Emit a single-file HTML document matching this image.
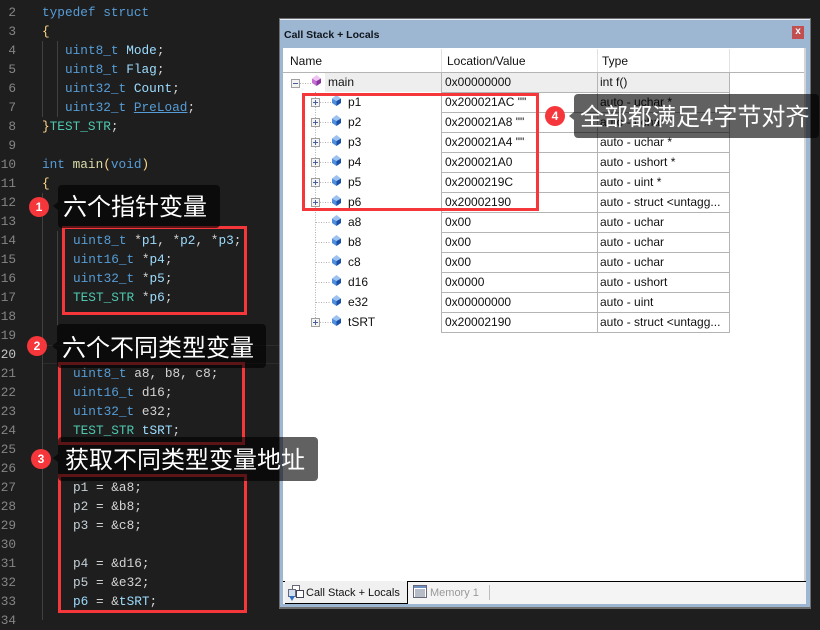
<!DOCTYPE html>
<html><head><meta charset="utf-8">
<style>
html,body{margin:0;padding:0;}
body{width:820px;height:620px;overflow:hidden;background:#1e1e1e;position:relative;font-family:"Liberation Sans","Noto Sans CJK SC",sans-serif;}
.a{position:absolute;}
.n,.c{position:absolute;font:12.75px/19px "Liberation Mono",monospace;white-space:pre;height:19px;}
.n{left:0;width:16px;text-align:right;color:#858585;}
.c{color:#d4d4d4;}
.k{color:#569cd6;}.t{color:#4ec9b0;}.v{color:#9cdcfe;}.f{color:#dcdcaa;}.b{color:#ffd68a;}.w{color:#c4d0d6;}
.g{position:absolute;width:1px;background:#404040;}
.r{position:absolute;font-size:12px;line-height:20px;color:#111;white-space:pre;}
.h{position:absolute;background:#b4b4b4;}
.lab{position:absolute;background:rgba(0,0,0,.62);border-radius:4px;color:#fff;font-family:"Liberation Sans","Noto Sans CJK SC",sans-serif;font-size:24px;white-space:pre;box-sizing:border-box;}
.bad{position:absolute;width:20px;height:20px;border-radius:50%;background:#f5363a;color:#fff;font:bold 12px/20px "Liberation Sans",sans-serif;text-align:center;}
.rb{position:absolute;border:3px solid #f5363a;box-sizing:border-box;}
.tri{position:absolute;width:0;height:0;border-top:4px solid transparent;border-bottom:4px solid transparent;border-right:5px solid rgba(0,0,0,.62);}
</style></head>
<body>
<div class="a" style="left:42px;top:345px;width:238px;height:1px;background:#2c2c2c"></div>
<div class="a" style="left:42px;top:363px;width:238px;height:1px;background:#2c2c2c"></div>
<div class="g" style="left:42px;top:41px;height:76px"></div>
<div class="g" style="left:57px;top:41px;height:76px"></div>
<div class="g" style="left:42px;top:193px;height:427px"></div>
<div class="g" style="left:57px;top:231px;height:94px"></div>

<div class="n" style="top:3px">2</div><div class="n" style="top:22px">3</div><div class="n" style="top:41px">4</div><div class="n" style="top:60px">5</div><div class="n" style="top:79px">6</div><div class="n" style="top:98px">7</div><div class="n" style="top:117px">8</div><div class="n" style="top:136px">9</div><div class="n" style="top:155px">10</div><div class="n" style="top:174px">11</div><div class="n" style="top:193px">12</div><div class="n" style="top:212px">13</div><div class="n" style="top:231px">14</div><div class="n" style="top:250px">15</div><div class="n" style="top:269px">16</div><div class="n" style="top:288px">17</div><div class="n" style="top:307px">18</div><div class="n" style="top:326px">19</div><div class="n" style="top:345px;color:#c6c6c6">20</div><div class="n" style="top:364px">21</div><div class="n" style="top:383px">22</div><div class="n" style="top:402px">23</div><div class="n" style="top:421px">24</div><div class="n" style="top:440px">25</div><div class="n" style="top:459px">26</div><div class="n" style="top:478px">27</div><div class="n" style="top:497px">28</div><div class="n" style="top:516px">29</div><div class="n" style="top:535px">30</div><div class="n" style="top:554px">31</div><div class="n" style="top:573px">32</div><div class="n" style="top:592px">33</div><div class="n" style="top:611px">34</div>

<div class="c k" style="left:42px;top:3px">typedef struct</div>
<div class="c b" style="left:42px;top:22px">{</div>
<div class="c" style="left:65px;top:41px"><span class="k">uint8_t</span> <span class="v">Mode</span>;</div>
<div class="c" style="left:65px;top:60px"><span class="k">uint8_t</span> <span class="v">Flag</span>;</div>
<div class="c" style="left:65px;top:79px"><span class="k">uint32_t</span> <span class="v">Count</span>;</div>
<div class="c" style="left:65px;top:98px"><span class="k">uint32_t</span> <span class="k" style="text-decoration:underline">PreLoad</span>;</div>
<div class="c" style="left:42px;top:117px"><span class="b">}</span><span class="t">TEST_STR</span>;</div>
<div class="c" style="left:42px;top:155px"><span class="k">int</span> <span class="f">main</span><span class="b">(</span><span class="k">void</span><span class="b">)</span></div>
<div class="c b" style="left:42px;top:174px">{</div>

<div class="c" style="left:73px;top:231px"><span class="k">uint8_t</span> *<span class="v">p1</span>, *<span class="v">p2</span>, *<span class="v">p3</span>;</div>
<div class="c" style="left:73px;top:250px"><span class="k">uint16_t</span> *<span class="v">p4</span>;</div>
<div class="c" style="left:73px;top:269px"><span class="k">uint32_t</span> *<span class="v">p5</span>;</div>
<div class="c" style="left:73px;top:288px"><span class="t">TEST_STR</span> *<span class="v">p6</span>;</div>

<div class="c" style="left:73px;top:364px"><span class="k">uint8_t</span> a8, b8, c8;</div>
<div class="c" style="left:73px;top:383px"><span class="k">uint16_t</span> d16;</div>
<div class="c" style="left:73px;top:402px"><span class="k">uint32_t</span> e32;</div>
<div class="c" style="left:73px;top:421px"><span class="t">TEST_STR</span> <span class="v">tSRT</span>;</div>

<div class="c" style="left:73px;top:478px"><span class="w">p1</span> = &amp;a8;</div>
<div class="c" style="left:73px;top:497px"><span class="w">p2</span> = &amp;b8;</div>
<div class="c" style="left:73px;top:516px"><span class="w">p3</span> = &amp;c8;</div>
<div class="c" style="left:73px;top:554px"><span class="w">p4</span> = &amp;d16;</div>
<div class="c" style="left:73px;top:573px"><span class="w">p5</span> = &amp;e32;</div>
<div class="c" style="left:73px;top:592px"><span class="v">p6</span> = &amp;<span class="v">tSRT</span>;</div>

<!-- window -->
<div class="a" style="left:279px;top:18px;width:532px;height:591px;background:#9db6d2;border:1px solid #6f6f6f;border-width:1px 1px 2px 1px;box-sizing:border-box"></div>
<div class="a" style="left:280px;top:19px;width:530px;height:1px;background:#e8eef5"></div>
<div class="a" style="left:284px;top:28px;font:bold 10.5px/14px 'Liberation Sans',sans-serif;color:#10161c;white-space:pre">Call Stack + Locals</div>
<div class="a" style="left:792px;top:26px;width:12px;height:13px;background:#c14f50;color:#fff;font:bold 10px/12px 'Liberation Sans',sans-serif;text-align:center">x</div>
<div class="a" style="left:283px;top:48px;width:523px;height:534px;background:#fff"></div>
<div class="a" style="left:804px;top:48px;width:2px;height:534px;background:#d4d4d4"></div>
<div class="a" style="left:283px;top:581px;width:523px;height:1px;background:#000"></div>
<div class="a" style="left:283px;top:582px;width:523px;height:22px;background:#f4f4f4"></div>
<div class="a" style="left:285px;top:581px;width:123px;height:23px;background:#f0f0f0;border-bottom:1px solid #000;border-right:1px solid #000;box-sizing:border-box"></div>
<svg class="a" style="left:287px;top:584px" width="18" height="18" viewBox="0 0 18 18"><rect x="5.5" y="1.5" width="7" height="7" fill="#fff" stroke="#667"/><rect x="1.5" y="5.5" width="7" height="7" fill="#cfe0f3" stroke="#667"/><rect x="9.500" y="6.500" width="7" height="7" fill="#fff" stroke="#445"/><path d="M2 12h6l-3 5z" fill="#2d6fc0"/></svg>
<div class="a" style="left:306px;top:586px;font:11px/14px 'Liberation Sans',sans-serif;color:#111;white-space:pre">Call Stack + Locals</div>
<svg class="a" style="left:413px;top:585px" width="14" height="13" viewBox="0 0 14 13"><rect x=".5" y=".5" width="13" height="12" fill="#fff" stroke="#667"/><rect x="1" y="1" width="12" height="2" fill="#6d8fc0"/><path d="M2 5h10M2 7h10M2 9h10M2 11h10M3 4v8M5 4v8M7 4v8M9 4v8M11 4v8" stroke="#8a93a8" stroke-width=".8"/></svg>
<div class="a" style="left:430px;top:586px;font:11px/14px 'Liberation Sans',sans-serif;color:#999;white-space:pre">Memory 1</div>
<div class="a" style="left:489px;top:585px;width:1px;height:15px;background:#bdbdbd"></div>

<!-- header -->
<div class="a" style="left:290px;top:54px;font-size:12px;line-height:14px;color:#111">Name</div>
<div class="a" style="left:447px;top:54px;font-size:12px;line-height:14px;color:#111">Location/Value</div>
<div class="a" style="left:602px;top:54px;font-size:12px;line-height:14px;color:#111">Type</div>
<div class="h" style="left:283px;top:72px;width:521px;height:1px"></div>
<div class="h" style="left:441px;top:49px;width:1px;height:23px;background:#e2e2e2"></div>
<div class="h" style="left:597px;top:49px;width:1px;height:23px;background:#e2e2e2"></div>
<div class="h" style="left:729px;top:49px;width:1px;height:23px;background:#e2e2e2"></div>
<div class="a" style="left:325px;top:73px;width:404px;height:19px;background:#eeeeee"></div>

<!-- grid -->
<div class="h" style="left:441px;top:73px;width:1px;height:260px"></div>
<div class="h" style="left:597px;top:73px;width:1px;height:260px"></div>
<div class="h" style="left:729px;top:73px;width:1px;height:260px"></div>
<div class="h" style="left:441px;top:92px;width:289px;height:1px"></div>
<div class="h" style="left:441px;top:112px;width:289px;height:1px"></div>
<div class="h" style="left:441px;top:132px;width:289px;height:1px"></div>
<div class="h" style="left:441px;top:152px;width:289px;height:1px"></div>
<div class="h" style="left:441px;top:172px;width:289px;height:1px"></div>
<div class="h" style="left:441px;top:192px;width:289px;height:1px"></div>
<div class="h" style="left:441px;top:212px;width:289px;height:1px"></div>
<div class="h" style="left:441px;top:232px;width:289px;height:1px"></div>
<div class="h" style="left:441px;top:252px;width:289px;height:1px"></div>
<div class="h" style="left:441px;top:272px;width:289px;height:1px"></div>
<div class="h" style="left:441px;top:292px;width:289px;height:1px"></div>
<div class="h" style="left:441px;top:312px;width:289px;height:1px"></div>
<div class="h" style="left:441px;top:332px;width:289px;height:1px"></div>

<!-- tree -->
<svg class="a" style="left:283px;top:70px" width="70" height="265" viewBox="283 70 70 265">
<defs>
<g id="cube"><path d="M4.500 0L9 3.500 4.500 6 0 3.500z" fill="#9cc2f0"/><path d="M0 3.500L4.500 6V11L0 8z" fill="#4f8ddc"/><path d="M9 3.500L4.500 6V11L9 8z" fill="#1a4fa8"/></g>
<g id="exp"><rect x=".5" y=".5" width="8" height="8" fill="#f4f4f4" stroke="#a0a0a0"/><path d="M2 4.500h5M4.500 2v5" stroke="#4a5f9a" stroke-width="1"/></g>
</defs>
<path d="M315.500 92V322" stroke="#b0b0b0" stroke-dasharray="1 1.500"/>
<path d="M300 83.500H311M320 102.500H331M320 122.500H331M320 142.500H331M320 162.500H331M320 182.500H331M320 202.500H331M316 222.500H331M316 242.500H331M316 262.500H331M316 282.500H331M316 302.500H331M320 322.500H331" stroke="#b0b0b0" stroke-dasharray="1 1.500"/>
<rect x="291.500" y="79.500" width="8" height="8" fill="#f4f4f4" stroke="#a0a0a0"/><path d="M293 83.500h5" stroke="#4a5f9a"/>
<path d="M316.500 75L321 78.500 316.500 81 312 78.500z" fill="#efc4f2"/><path d="M312 78.500L316.500 81V86L312 83z" fill="#c670d6"/><path d="M321 78.500L316.500 81V86L321 83z" fill="#8a36a2"/>
<use href="#exp" x="311" y="98"/><use href="#cube" x="332" y="95"/>
<use href="#exp" x="311" y="118"/><use href="#cube" x="332" y="115"/>
<use href="#exp" x="311" y="138"/><use href="#cube" x="332" y="135"/>
<use href="#exp" x="311" y="158"/><use href="#cube" x="332" y="155"/>
<use href="#exp" x="311" y="178"/><use href="#cube" x="332" y="175"/>
<use href="#exp" x="311" y="198"/><use href="#cube" x="332" y="195"/>
<use href="#cube" x="332" y="215"/><use href="#cube" x="332" y="235"/><use href="#cube" x="332" y="255"/><use href="#cube" x="332" y="275"/><use href="#cube" x="332" y="295"/>
<use href="#exp" x="311" y="318"/><use href="#cube" x="332" y="315"/>
</svg>

<div class="r" style="left:328px;top:72px">main</div><div class="r" style="left:445px;top:72px">0x00000000</div><div class="r" style="left:600px;top:72px">int f()</div>
<div class="r" style="left:348px;top:92px">p1</div><div class="r" style="left:445px;top:92px">0x200021AC ""</div><div class="r" style="left:600px;top:92px">auto - uchar *</div>
<div class="r" style="left:348px;top:112px">p2</div><div class="r" style="left:445px;top:112px">0x200021A8 ""</div><div class="r" style="left:600px;top:112px">auto - uchar *</div>
<div class="r" style="left:348px;top:132px">p3</div><div class="r" style="left:445px;top:132px">0x200021A4 ""</div><div class="r" style="left:600px;top:132px">auto - uchar *</div>
<div class="r" style="left:348px;top:152px">p4</div><div class="r" style="left:445px;top:152px">0x200021A0</div><div class="r" style="left:600px;top:152px">auto - ushort *</div>
<div class="r" style="left:348px;top:172px">p5</div><div class="r" style="left:445px;top:172px">0x2000219C</div><div class="r" style="left:600px;top:172px">auto - uint *</div>
<div class="r" style="left:348px;top:192px">p6</div><div class="r" style="left:445px;top:192px">0x20002190</div><div class="r" style="left:600px;top:192px">auto - struct &lt;untagg...</div>
<div class="r" style="left:348px;top:212px">a8</div><div class="r" style="left:445px;top:212px">0x00</div><div class="r" style="left:600px;top:212px">auto - uchar</div>
<div class="r" style="left:348px;top:232px">b8</div><div class="r" style="left:445px;top:232px">0x00</div><div class="r" style="left:600px;top:232px">auto - uchar</div>
<div class="r" style="left:348px;top:252px">c8</div><div class="r" style="left:445px;top:252px">0x00</div><div class="r" style="left:600px;top:252px">auto - uchar</div>
<div class="r" style="left:348px;top:272px">d16</div><div class="r" style="left:445px;top:272px">0x0000</div><div class="r" style="left:600px;top:272px">auto - ushort</div>
<div class="r" style="left:348px;top:292px">e32</div><div class="r" style="left:445px;top:292px">0x00000000</div><div class="r" style="left:600px;top:292px">auto - uint</div>
<div class="r" style="left:348px;top:312px">tSRT</div><div class="r" style="left:445px;top:312px">0x20002190</div><div class="r" style="left:600px;top:312px">auto - struct &lt;untagg...</div>

<!-- red boxes -->
<div class="rb" style="left:62px;top:226px;width:185px;height:89px"></div>
<div class="rb" style="left:58px;top:362px;width:187px;height:83px"></div>
<div class="rb" style="left:58px;top:474px;width:189px;height:139px"></div>
<div class="rb" style="left:302px;top:93px;width:237px;height:118px"></div>

<!-- labels -->
<div class="lab" style="left:58px;top:185px;width:162px;height:43px;line-height:46px;padding-left:5px">六个指针变量</div>
<div class="tri" style="left:53px;top:202px"></div>
<div class="bad" style="left:29px;top:197px">1</div>
<div class="lab" style="left:57px;top:324px;width:209px;height:44px;line-height:49px;padding-left:5px">六个不同类型变量</div>
<div class="tri" style="left:52px;top:342px"></div>
<div class="bad" style="left:27px;top:336px">2</div>
<div class="lab" style="left:58px;top:437px;width:260px;height:44px;line-height:48px;padding-left:7px">获取不同类型变量地址</div>
<div class="tri" style="left:53px;top:454px"></div>
<div class="bad" style="left:31px;top:449px">3</div>
<div class="lab" style="left:574px;top:94px;width:245px;height:44px;line-height:48px;padding-left:6px">全部都满足4字节对齐</div>
<div class="tri" style="left:569px;top:112px"></div>
<div class="bad" style="left:545px;top:106px">4</div>
</body></html>
